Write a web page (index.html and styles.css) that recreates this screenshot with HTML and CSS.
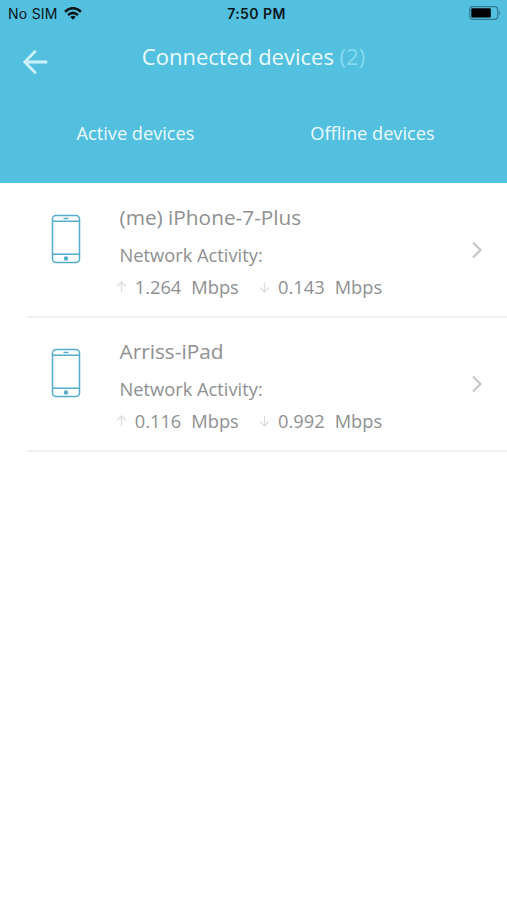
FILE: index.html
```html
<!DOCTYPE html>
<html lang="en">
<head>
<meta charset="utf-8">
<title>Connected devices</title>
<link rel="stylesheet" href="styles.css">
</head>
<body>
<header class="header">
  <div class="status">
    <div class="carrier"><span>No SIM</span>
      <svg class="wifi" width="18" height="13" viewBox="0 0 18 13"><g fill="none" stroke="#07161b" stroke-width="2.5"><path d="M1 4.7Q9-2.4 17 4.7"/><path d="M4 8Q9 3.7 14 8"/></g><path d="M6.3 9.9Q9 7.6 11.7 9.9L9 12.7z" fill="#07161b"/></svg>
    </div>
    <div class="time">7:50 PM</div>
    <svg class="battery" width="32" height="14" viewBox="0 0 32 14"><rect x=".7" y=".7" width="28" height="12.6" rx="3.3" fill="none" stroke="#32798c" stroke-width="1.2"/><rect x="2.3" y="2.3" width="19.5" height="9.2" rx="1" fill="#000"/><path d="M30.2 4.7q2 2.2 0 4.5z" fill="#32798c"/></svg>
  </div>
  <div class="nav">
    <svg class="back" width="26" height="26" viewBox="0 0 26 26"><path d="M24.3 13H2M12.8 1.8L1.8 13l11 11.2" fill="none" stroke="#cdf1fa" stroke-width="2.8"/></svg>
    <h1 class="title">Connected devices <span class="count">(2)</span></h1>
  </div>
  <nav class="tabs"><span class="tab">Active devices</span><span class="tab">Offline devices</span></nav>
</header>
<main class="list">
  <section class="device">
    <svg class="phone" width="30" height="50" viewBox="0 0 30 50"><g fill="none" stroke="#55adcb" stroke-width="1.5"><rect x="1.5" y="1.5" width="27" height="47" rx="3.5"/><path d="M1.5 7.2h27M1.5 40.2h27M12.5 4.5h5"/></g><circle cx="15" cy="44.5" r="2.2" fill="#55adcb"/></svg>
    <div class="info">
      <h2 class="name">(me) iPhone-7-Plus</h2>
      <p class="label">Network Activity:</p>
      <div class="rates">
        <svg class="arrow" width="11" height="12" viewBox="0 0 11 12"><path d="M5.5 11V1M1 5.5L5.5 1 10 5.5"/></svg><span class="value">1.264</span><span class="unit">Mbps</span>
        <svg class="arrow down" width="11" height="12" viewBox="0 0 11 12"><path d="M5.5 1v10M1 6.5L5.5 11 10 6.5"/></svg><span class="value">0.143</span><span class="unit">Mbps</span>
      </div>
    </div>
    <svg class="chevron" width="12" height="18" viewBox="0 0 12 18"><path d="M2 1.5L9.5 9 2 16.5"/></svg>
  </section>
  <section class="device">
    <svg class="phone" width="30" height="50" viewBox="0 0 30 50"><g fill="none" stroke="#55adcb" stroke-width="1.5"><rect x="1.5" y="1.5" width="27" height="47" rx="3.5"/><path d="M1.5 7.2h27M1.5 40.2h27M12.5 4.5h5"/></g><circle cx="15" cy="44.5" r="2.2" fill="#55adcb"/></svg>
    <div class="info">
      <h2 class="name">Arriss-iPad</h2>
      <p class="label">Network Activity:</p>
      <div class="rates">
        <svg class="arrow" width="11" height="12" viewBox="0 0 11 12"><path d="M5.5 11V1M1 5.5L5.5 1 10 5.5"/></svg><span class="value">0.116</span><span class="unit">Mbps</span>
        <svg class="arrow down" width="11" height="12" viewBox="0 0 11 12"><path d="M5.5 1v10M1 6.5L5.5 11 10 6.5"/></svg><span class="value">0.992</span><span class="unit">Mbps</span>
      </div>
    </div>
    <svg class="chevron" width="12" height="18" viewBox="0 0 12 18"><path d="M2 1.5L9.5 9 2 16.5"/></svg>
  </section>
</main>
</body>
</html>
```

FILE: styles.css
```css
* { box-sizing: border-box; }
body, h1, h2, p { margin: 0; }
body { width: 507px; min-height: 900px; background: #fff; font-family: "Open Sans", sans-serif; overflow: hidden; }
h1, h2 { font-weight: 400; }
.header { height: 183px; background: #54c0df; color: #eafaff; }
.status { height: 26px; padding: 0 6px 0 8px; display: grid; grid-template-columns: 1fr auto 1fr; align-items: center; color: #07161b; font-family: Inter, sans-serif; font-size: 14px; }
.carrier { display: flex; align-items: center; gap: 6px; letter-spacing: .25px; }
.time { font-weight: 600; letter-spacing: .45px; margin-left: 4px; }
.battery { justify-self: end; }
.nav { height: 62px; padding: 0 23px; display: grid; grid-template-columns: 26px 1fr 26px; }
.back { margin-top: 23px; }
.title { text-align: center; font-size: 22px; line-height: 60px; white-space: nowrap; }
.count { color: #83dbef; }
.tabs { height: 90px; padding: 0 16px 0 17px; display: grid; grid-template-columns: 1fr 1fr; text-align: center; font-size: 18.2px; line-height: 90px; }
.device { height: 134px; margin-left: 26px; padding: 18px 24px 0 25px; border-bottom: 2px solid #f0f0f0; display: flex; align-items: flex-start; }
.device:first-child { height: 135px; padding-top: 19px; }
.phone { margin-top: 11.5px; }
.info { flex: 1; margin-left: 38.5px; color: #8e9092; }
.name { font-size: 20.8px; line-height: 30px; }
.label { margin-top: 9px; font-size: 18.3px; line-height: 28px; }
.rates { display: flex; align-items: center; margin-left: -4px; margin-top: 4px; font-size: 18.3px; line-height: 28px; }
.value { margin-left: 8.2px; }
.unit { margin-left: 10px; }
.down { margin-left: 20px; }
.arrow { fill: none; stroke: #dcddde; stroke-width: 1.3; }
.chevron { margin-top: 39px; fill: none; stroke: #c5c6c7; stroke-width: 2.2; }
```
